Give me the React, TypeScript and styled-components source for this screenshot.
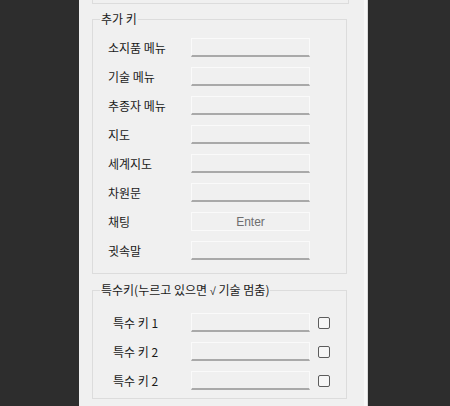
import React from "react";
import styled, { createGlobalStyle } from "styled-components";

/* Global */
const GlobalStyle = createGlobalStyle`
  html, body {
    margin: 0;
    padding: 0;
    background: #2d2d2d;
  }
  body {
    font-family: "Noto Sans CJK KR", "Noto Sans", sans-serif;
    font-size: 12px;
    color: #1a1a1a;
  }
`;

/* Styled Components */
const Page = styled.div`
  width: 450px;
  height: 406px;
  overflow: hidden;
  display: flex;
`;

const Panel = styled.div`
  margin-left: 79px;
  width: 289px;
  height: 406px;
  box-sizing: border-box;
  padding-left: 13px;
  background: #f0f0f0;
  box-shadow: inset -1px 0 0 #dadada, inset -4px 0 0 #f8f8f8;
  display: flex;
  flex-direction: column;
`;

const GroupTail = styled.div`
  width: 255px;
  height: 3px;
  box-sizing: content-box;
  border: 1px solid #dcdcdc;
  border-top: none;
`;

const Group = styled.div<{ $top: number; $padTop: number; $padBottom: number }>`
  position: relative;
  width: 253px;
  margin-top: ${(p) => p.$top}px;
  padding: ${(p) => p.$padTop}px 0 ${(p) => p.$padBottom}px;
  border: 1px solid #dcdcdc;
  display: flex;
  flex-direction: column;
  gap: 10px;
`;

const Caption = styled.span`
  position: absolute;
  top: -9px;
  left: 7px;
  padding: 0 1px;
  line-height: 16px;
  background: #f0f0f0;
  white-space: nowrap;
`;

const Root = styled.span`
  font-family: "Liberation Sans", Arial, sans-serif;
  font-size: 11px;
`;

const Row = styled.div<{ $indent: number }>`
  display: flex;
  align-items: center;
  height: 19px;
  padding-left: ${(p) => p.$indent}px;
`;

const Label = styled.span<{ $width: number }>`
  width: ${(p) => p.$width}px;
  flex-shrink: 0;
  line-height: 19px;
  white-space: nowrap;
`;

const KeyBox = styled.div<{ $plain?: boolean }>`
  width: 119px;
  height: 19px;
  box-sizing: border-box;
  background: #f0f0f0;
  border: 1px solid #fafafa;
  border-bottom: ${(p) => (p.$plain ? "1px solid #fafafa" : "2px solid #a9a9a9")};
  display: flex;
  align-items: center;
  justify-content: center;
  font-family: "Liberation Sans", Arial, sans-serif;
  font-size: 12px;
  color: #6e6e6e;
`;

const Check = styled.span`
  width: 12px;
  height: 12px;
  margin-left: 8px;
  box-sizing: border-box;
  border: 1px solid #5c5c5c;
  border-radius: 2px;
  background: #f6f6f6;
  flex-shrink: 0;
`;

/* Data */
const extraKeys = [
  { label: "소지품 메뉴", value: "" },
  { label: "기술 메뉴", value: "" },
  { label: "추종자 메뉴", value: "" },
  { label: "지도", value: "" },
  { label: "세계지도", value: "" },
  { label: "차원문", value: "" },
  { label: "채팅", value: "Enter" },
  { label: "귓속말", value: "" },
];

const specialKeys = ["특수 키 1", "특수 키 2", "특수 키 2"];

/* Components */
const App: React.FC = () => (
  <>
    <GlobalStyle />
    <Page>
      <Panel>
        <GroupTail />
        <Group $top={15} $padTop={18} $padBottom={13}>
          <Caption>추가 키</Caption>
          {extraKeys.map((k) => (
            <Row key={k.label} $indent={15}>
              <Label $width={83}>{k.label}</Label>
              <KeyBox $plain={!!k.value}>{k.value}</KeyBox>
            </Row>
          ))}
        </Group>
        <Group $top={16} $padTop={22} $padBottom={8}>
          <Caption>
            특수키(누르고 있으면 <Root>√</Root> 기술 멈춤)
          </Caption>
          {specialKeys.map((label, i) => (
            <Row key={i} $indent={20}>
              <Label $width={78}>{label}</Label>
              <KeyBox />
              <Check />
            </Row>
          ))}
        </Group>
      </Panel>
    </Page>
  </>
);

export default App;
